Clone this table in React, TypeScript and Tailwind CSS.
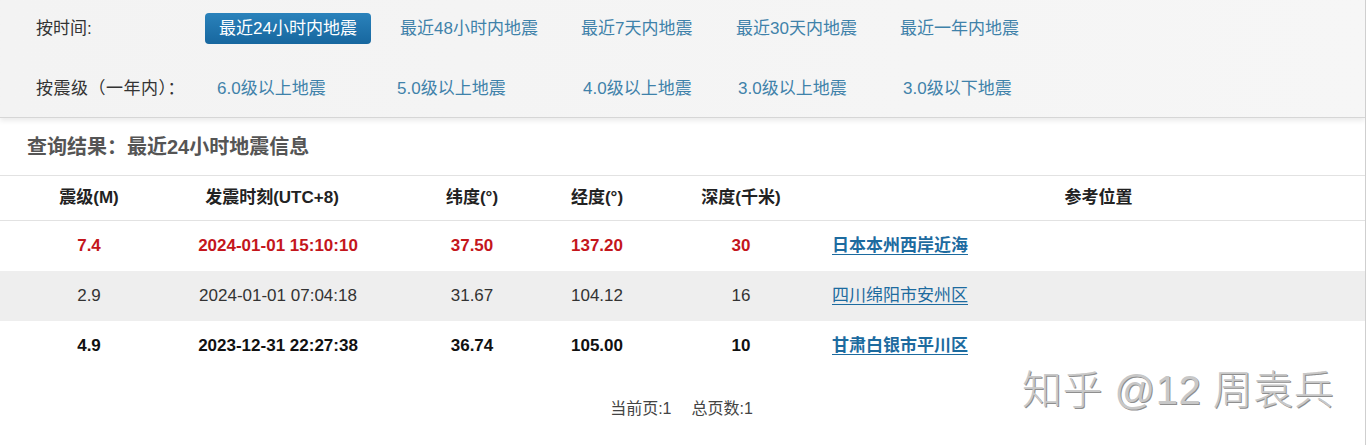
import React from "react";

type Quake = {
  mag: string;
  time: string;
  lat: string;
  lon: string;
  depth: string;
  place: string;
  tone: "red" | "plain" | "bold";
};

const quakes: Quake[] = [
  { mag: "7.4", time: "2024-01-01 15:10:10", lat: "37.50", lon: "137.20", depth: "30", place: "日本本州西岸近海", tone: "red" },
  { mag: "2.9", time: "2024-01-01 07:04:18", lat: "31.67", lon: "104.12", depth: "16", place: "四川绵阳市安州区", tone: "plain" },
  { mag: "4.9", time: "2023-12-31 22:27:38", lat: "36.74", lon: "105.00", depth: "10", place: "甘肃白银市平川区", tone: "bold" },
];

const timeLinks = ["最近48小时内地震", "最近7天内地震", "最近30天内地震", "最近一年内地震"];

const magLinks = [
  { label: "6.0级以上地震", pad: "pl-[12px]" },
  { label: "5.0级以上地震", pad: "pl-[11px]" },
  { label: "4.0级以上地震", pad: "pl-[16px]" },
  { label: "3.0级以上地震", pad: "pl-[16px]" },
  { label: "3.0级以下地震", pad: "pl-[17px]" },
];

const toneClass = {
  red: "font-bold text-[#c4161c]",
  plain: "text-[#333]",
  bold: "font-bold text-[#111]",
};

const gridCols = "grid grid-cols-[178px_188px_168px_132px_166px_1fr]";

const FilterPanel = () => (
  <div className="bg-gradient-to-r from-[#f3f3f3] to-[#f6f6f6] border-b border-[#d6d6d6] shadow-[0_3px_5px_rgba(0,0,0,0.08)] h-[118px] text-[17px]">
    <div className="grid grid-cols-[205px_181px_181px_155px_164px_1fr] items-center h-[54px] pt-[3px]">
      <div className="pl-[36px] text-[#333]">按时间:</div>
      <div>
        <span className="inline-block rounded-[4px] bg-gradient-to-b from-[#2a82bb] to-[#17679f] px-[14px] h-[31px] leading-[31px] text-white whitespace-nowrap">
          最近24小时内地震
        </span>
      </div>
      {timeLinks.map((t) => (
        <div key={t} className="pl-[14px] text-[#3f82aa] whitespace-nowrap">
          {t}
        </div>
      ))}
    </div>
    <div className="grid grid-cols-[205px_181px_181px_155px_164px_1fr] items-center h-[64px] pt-[5px]">
      <div className="pl-[36px] text-[#333] whitespace-nowrap tracking-[0.5px]">按震级（一年内）：</div>
      {magLinks.map((m) => (
        <div key={m.label} className={`${m.pad} text-[#3f82aa] whitespace-nowrap`}>
          {m.label}
        </div>
      ))}
    </div>
  </div>
);

const ResultTable = () => (
  <div className="text-[17px]">
    <div className={`${gridCols} h-[46px] items-center border-t border-b border-[#e2e2e2] font-bold text-[#222] shadow-[0_2px_3px_rgba(0,0,0,0.04)]`}>
      <div className="text-center">震级(M)</div>
      <div className="text-center">发震时刻(UTC+8)</div>
      <div className="text-center pl-[44px]">纬度(°)</div>
      <div className="text-center pr-[6px]">经度(°)</div>
      <div className="text-center pr-[16px]">深度(千米)</div>
      <div className="text-center pl-[654px] -ml-[654px]">参考位置</div>
    </div>
    {quakes.map((q, i) => (
      <div
        key={q.time}
        className={`${gridCols} h-[50px] items-center ${i === 1 ? "bg-[#eeeeee]" : "bg-white"} ${toneClass[q.tone]}`}
      >
        <div className="text-center">{q.mag}</div>
        <div className="text-center pl-[12px]">{q.time}</div>
        <div className="text-center pl-[44px]">{q.lat}</div>
        <div className="text-center pr-[6px]">{q.lon}</div>
        <div className="text-center pr-[16px]">{q.depth}</div>
        <div>
          <a
            className={`underline underline-offset-[3px] text-[#1d6b9f] ${q.tone === "plain" ? "font-normal" : "font-bold"}`}
          >
            {q.place}
          </a>
        </div>
      </div>
    ))}
  </div>
);

export default function App() {
  return (
    <div
      className="relative w-[1366px] h-[445px] bg-white border-r border-[#cfcfcf] overflow-hidden"
      style={{ fontFamily: '"Liberation Sans", "Noto Sans CJK SC", sans-serif' }}
    >
      <FilterPanel />
      <div className="h-[57px] flex items-center pl-[27px] text-[20px] font-bold text-[#555]">
        查询结果：最近24小时地震信息
      </div>
      <ResultTable />
      <div className="flex justify-center gap-[20px] pt-[26px] text-[16px] text-[#444] pr-[2px]">
        <span>当前页:1</span>
        <span>总页数:1</span>
      </div>
      <div className="absolute left-[1022px] top-[360px] text-[40px] font-extralight text-[#c8c8c8] [text-shadow:1px_1px_0_#8e8e8e] whitespace-nowrap tracking-[0.5px]">
        知乎 @12 周袁兵
      </div>
    </div>
  );
}
